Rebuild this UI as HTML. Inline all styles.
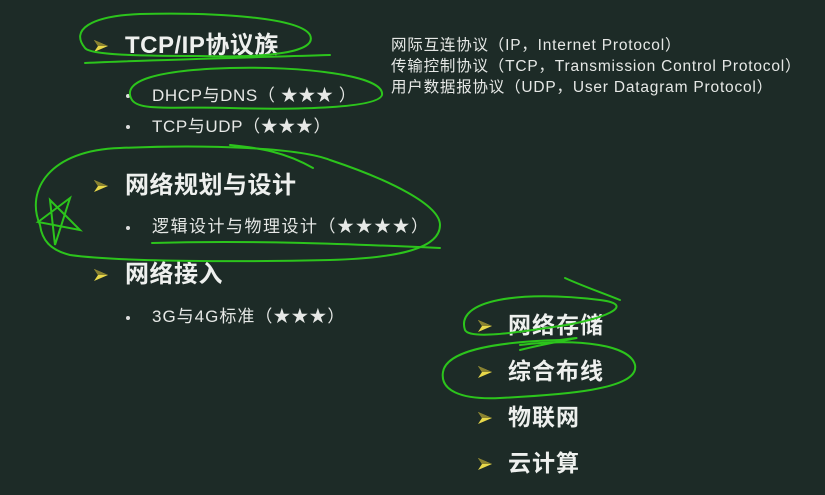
<!DOCTYPE html>
<html><head><meta charset="utf-8"><style>
html,body{margin:0;padding:0}
body{width:825px;height:495px;background:#1d2b27;position:relative;overflow:hidden;font-family:"Liberation Sans","Noto Sans CJK SC",sans-serif;color:#eef0ee}
.t{position:absolute;white-space:nowrap;line-height:1}
.h{font-weight:bold;font-size:24px;letter-spacing:0.5px}
.s{font-size:17px;letter-spacing:0.6px;color:#e6e8e6}
.r{font-size:15.5px;line-height:21px;letter-spacing:0.8px;color:#e6e8e6}
.a{position:absolute;width:14px;height:12px}
.b{position:absolute;width:4px;height:4px;border-radius:50%;background:#ddd}
svg.ov{position:absolute;left:0;top:0}
</style></head><body>
<svg width="0" height="0" style="position:absolute"><defs><symbol id="ar" viewBox="0 0 14 12"><path d="M0 0 L14 6 L0 12 L4 6 Z" fill="#e8d84a"/><path d="M0 0 L14 6 L4 6 Z" fill="#8a8230"/></symbol></defs></svg>

<svg class="a" style="left:94px;top:40px"><use href="#ar"/></svg>
<div class="t h" style="left:125px;top:34px">TCP/IP协议族</div>
<div class="b" style="left:126px;top:94px"></div>
<div class="t s" style="left:152px;top:87px">DHCP与DNS（ ★★★ ）</div>
<div class="b" style="left:126px;top:125px"></div>
<div class="t s" style="left:152px;top:118px">TCP与UDP（★★★）</div>

<svg class="a" style="left:94px;top:180px"><use href="#ar"/></svg>
<div class="t h" style="left:125px;top:174px">网络规划与设计</div>
<div class="b" style="left:126px;top:226px"></div>
<div class="t s" style="left:152px;top:218px;letter-spacing:1.5px">逻辑设计与物理设计（★★★★）</div>

<svg class="a" style="left:94px;top:269px"><use href="#ar"/></svg>
<div class="t h" style="left:125px;top:263px">网络接入</div>
<div class="b" style="left:126px;top:316px"></div>
<div class="t s" style="left:152px;top:308px;letter-spacing:1px">3G与4G标准（★★★）</div>

<div class="t r" style="left:391px;top:35px">网际互连协议（IP，Internet Protocol）<br>传输控制协议（TCP，Transmission Control Protocol）<br>用户数据报协议（UDP，User Datagram Protocol）</div>

<svg class="a" style="left:478px;top:320px"><use href="#ar"/></svg>
<div class="t h" style="left:508px;top:314px;font-size:23px;letter-spacing:1px">网络存储</div>
<svg class="a" style="left:478px;top:366px"><use href="#ar"/></svg>
<div class="t h" style="left:508px;top:360px;font-size:23px;letter-spacing:1px">综合布线</div>
<svg class="a" style="left:478px;top:412px"><use href="#ar"/></svg>
<div class="t h" style="left:508px;top:406px;font-size:23px;letter-spacing:1px">物联网</div>
<svg class="a" style="left:478px;top:458px"><use href="#ar"/></svg>
<div class="t h" style="left:508px;top:452px;font-size:23px;letter-spacing:1px">云计算</div>

<svg class="ov" width="825" height="495" fill="none" stroke="#2cc41c" stroke-width="2" stroke-linecap="round">
<path d="M85 48 C70 30,90 16,140 14 C220 12,300 18,310 35 C318 52,270 58,200 56 C140 56,90 55,85 48"/>
<path d="M85 63 C150 60,230 58,330 55"/>
<path d="M132 100 C120 80,160 70,230 68 C300 66,385 75,382 95 C378 108,300 110,230 108 C180 106,140 112,132 100"/>
<path d="M40 225 C25 190,50 150,120 148 C210 144,300 148,330 160 C390 180,440 205,440 225 C440 248,400 258,330 260 C250 262,120 262,70 255 C50 250,42 240,40 225"/>
<path d="M230 145 C260 148,285 152,313 168"/>
<path d="M152 243 C250 240,350 244,440 248"/>
<path d="M38 222 L70 198 L55 245 L50 200 L80 230 Z"/>
<path d="M465 330 C455 300,520 290,600 300 C640 305,600 320,560 326 C520 332,470 340,465 330"/>
<path d="M565 278 C580 285,600 292,620 300"/>
<path d="M520 350 C560 340,600 335,560 340"/>
<path d="M520 345 C580 338,630 345,635 365 C640 390,560 395,500 398 C460 400,440 390,443 372 C446 352,490 342,560 340"/>
</svg>
</body></html>
